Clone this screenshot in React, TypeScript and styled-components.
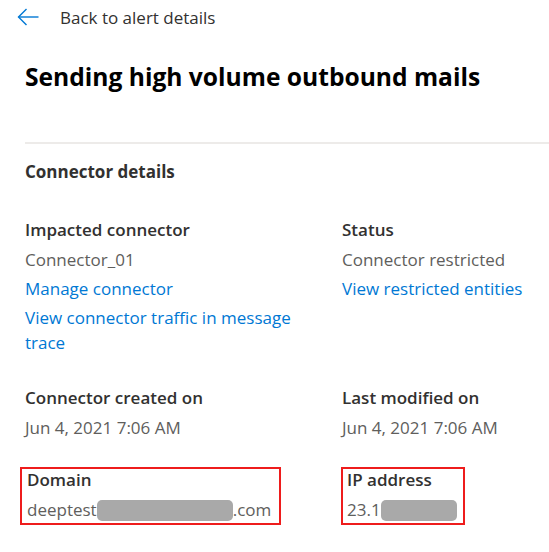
import React from "react";
import styled, { createGlobalStyle } from "styled-components";

const Global = createGlobalStyle`
  html, body { margin: 0; padding: 0; background: #ffffff; }
  body { font-family: "Open Sans", "Noto Sans", sans-serif; -webkit-font-smoothing: antialiased; }
`;

const Page = styled.div`
  width: 549px;
  height: 552px;
  overflow: hidden;
  display: flex;
  flex-direction: column;
`;

const BackRow = styled.a`
  display: flex;
  align-items: center;
  gap: 21px;
  height: 34px;
  padding-left: 17px;
  color: #323130;
  font-size: 17px;
  text-decoration: none;
`;

const Title = styled.h1`
  margin: 27px 0 0 25px;
  font-size: 24.6px;
  line-height: 32px;
  font-weight: 700;
  color: #000000;
  white-space: nowrap;
`;

const Divider = styled.hr`
  margin: 49px 0 0 25px;
  border: none;
  border-top: 2px solid #edebe9;
  height: 0;
`;

const SectionTitle = styled.h2`
  margin: 17px 0 0 25px;
  font-size: 17px;
  line-height: 22px;
  font-weight: 700;
  color: #323130;
`;

const Grid = styled.div`
  display: grid;
  grid-template-columns: 285px 1fr;
  column-gap: 32px;
  row-gap: 32px;
  margin: 36px 0 0 25px;
  align-items: start;
`;

const Field = styled.div`
  display: flex;
  flex-direction: column;
`;

const Label = styled.div`
  font-size: 17px;
  line-height: 22px;
  font-weight: 600;
  color: #323130;
`;

const Value = styled.div`
  margin-top: 6px;
  font-size: 17px;
  line-height: 25px;
  color: #605e5c;
  white-space: nowrap;
`;

const Link = styled.a`
  margin-top: 4px;
  font-size: 17px;
  line-height: 25px;
  color: #0078d4;
  text-decoration: none;
`;

const Highlight = styled.div<{ $shift: number; $left: number; $right: number }>`
  display: inline-flex;
  flex-direction: column;
  align-self: flex-start;
  border: 2px solid #ee1c1c;
  padding: 0 ${(p) => p.$right}px 1px ${(p) => p.$left}px;
  margin-left: ${(p) => p.$shift}px;
  margin-top: -5px;
`;

const Redacted = styled.span<{ $w: number }>`
  display: inline-block;
  width: ${(p) => p.$w}px;
  height: 21px;
  background: #a9a9a9;
  border-radius: 5px;
  vertical-align: -5px;
  filter: blur(0.4px);
`;

const Arrow = () => (
  <svg width="22" height="18" viewBox="0 0 22 18" fill="none" stroke="#0078d4" strokeWidth="1.4">
    <path d="M21.5 9H1.5" />
    <path d="M9.5 1L1.5 9L9.5 17" />
  </svg>
);

export default function App() {
  return (
    <>
      <Global />
      <Page>
        <BackRow href="#">
          <Arrow />
          <span>Back to alert details</span>
        </BackRow>
        <Title>Sending high volume outbound mails</Title>
        <Divider />
        <SectionTitle>Connector details</SectionTitle>
        <Grid>
          <Field>
            <Label>Impacted connector</Label>
            <Value>Connector_01</Value>
            <Link href="#">Manage connector</Link>
            <Link href="#">View connector traffic in message trace</Link>
          </Field>
          <Field>
            <Label>Status</Label>
            <Value>Connector restricted</Value>
            <Link href="#">View restricted entities</Link>
          </Field>
          <Field>
            <Label>Connector created on</Label>
            <Value>Jun 4, 2021 7:06 AM</Value>
          </Field>
          <Field>
            <Label>Last modified on</Label>
            <Value>Jun 4, 2021 7:06 AM</Value>
          </Field>
          <Field>
            <Highlight $shift={-5} $left={5} $right={8}>
              <Label>Domain</Label>
              <Value>
                deeptest
                <Redacted $w={136} />
                .com
              </Value>
            </Highlight>
          </Field>
          <Field>
            <Highlight $shift={-1} $left={4} $right={6}>
              <Label>IP address</Label>
              <Value>
                23.1
                <Redacted $w={76} />
              </Value>
            </Highlight>
          </Field>
        </Grid>
      </Page>
    </>
  );
}
